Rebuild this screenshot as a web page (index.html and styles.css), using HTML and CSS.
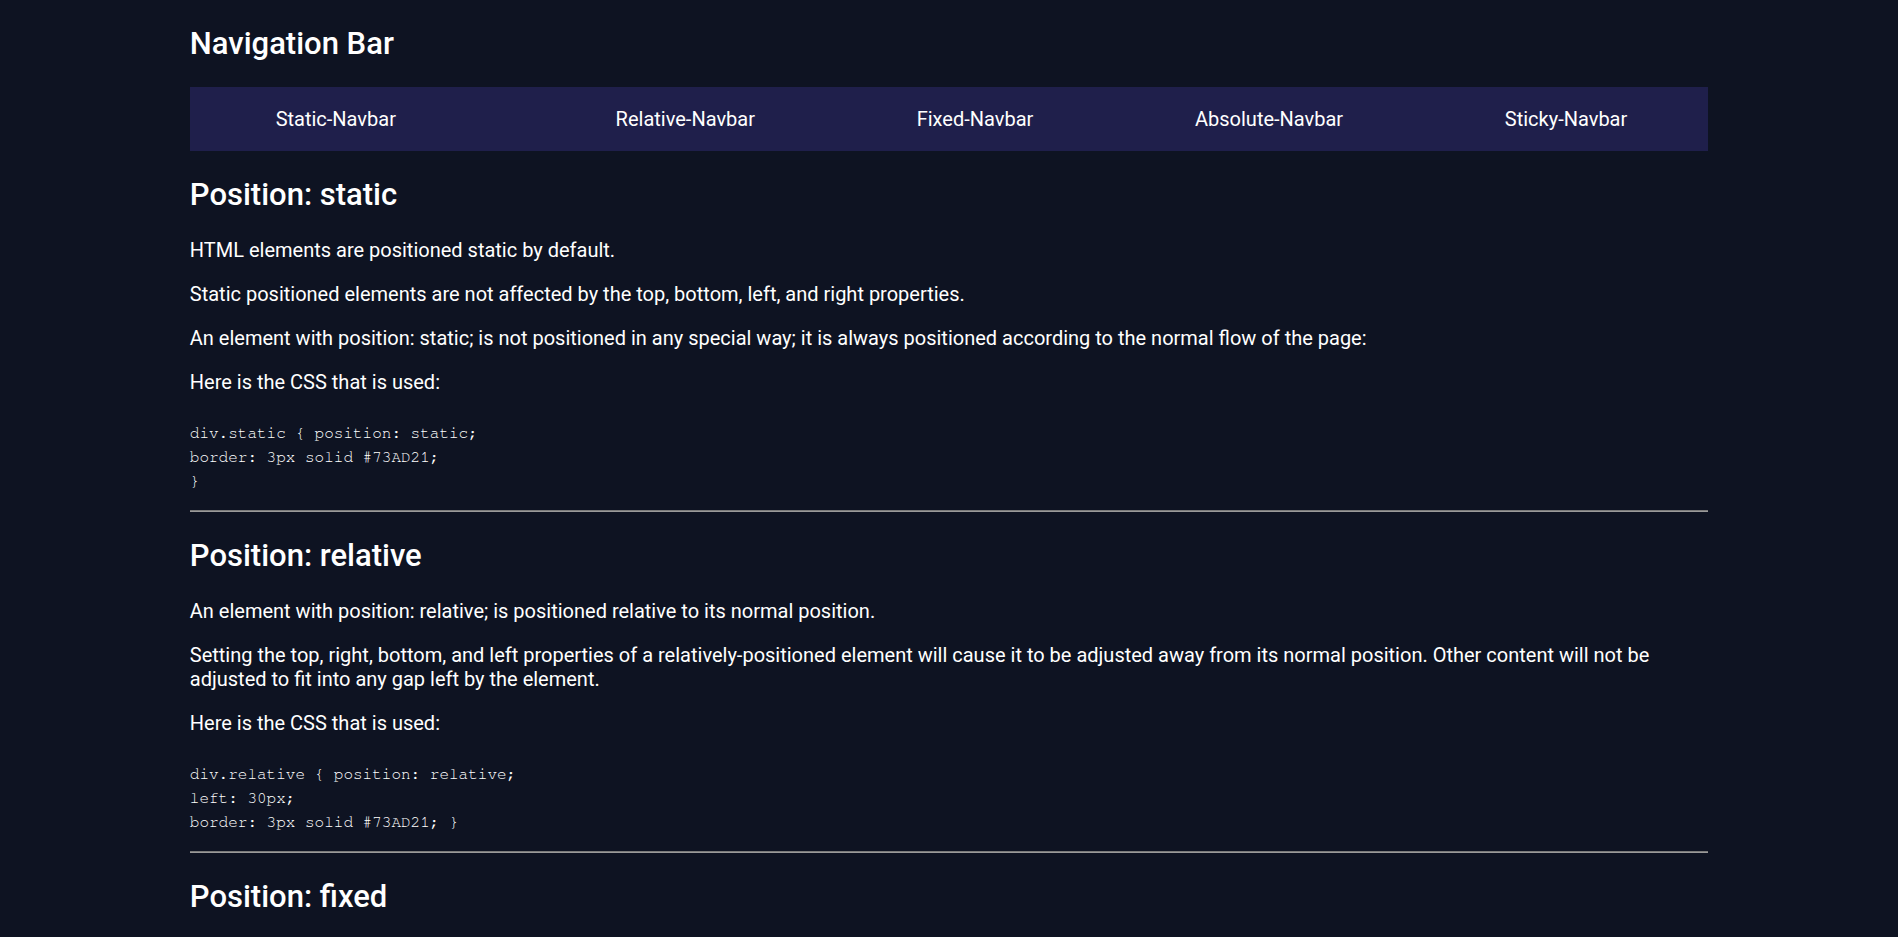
FILE: index.html
```html
<!DOCTYPE html>
<html lang="en">
<head>
<meta charset="utf-8">
<title>Navigation Bar</title>
<link rel="stylesheet" href="styles.css">
</head>
<body>
<div class="page">
  <h1 class="page-title">Navigation Bar</h1>
  <nav class="navbar">
    <a class="nav-link nav-link-first" href="#static">Static-Navbar</a>
    <a class="nav-link" href="#relative">Relative-Navbar</a>
    <a class="nav-link" href="#fixed">Fixed-Navbar</a>
    <a class="nav-link" href="#absolute">Absolute-Navbar</a>
    <a class="nav-link" href="#sticky">Sticky-Navbar</a>
  </nav>

  <section class="section" id="static">
    <h2 class="section-title">Position: static</h2>
    <p class="text">HTML elements are positioned static by default.</p>
    <p class="text">Static positioned elements are not affected by the top, bottom, left, and right properties.</p>
    <p class="text">An element with position: static; is not positioned in any special way; it is always positioned according to the normal flow of the page:</p>
    <p class="text">Here is the CSS that is used:</p>
    <pre class="code">div.static { position: static;
border: 3px solid #73AD21;
}</pre>
  </section>
  <hr class="divider">

  <section class="section" id="relative">
    <h2 class="section-title">Position: relative</h2>
    <p class="text">An element with position: relative; is positioned relative to its normal position.</p>
    <p class="text">Setting the top, right, bottom, and left properties of a relatively-positioned element will cause it to be adjusted away from its normal position. Other content will not be adjusted to fit into any gap left by the element.</p>
    <p class="text">Here is the CSS that is used:</p>
    <pre class="code">div.relative { position: relative;
left: 30px;
border: 3px solid #73AD21; }</pre>
  </section>
  <hr class="divider">

  <section class="section" id="fixed">
    <h2 class="section-title">Position: fixed</h2>
    <p class="text">An element with position: fixed; is positioned relative to the viewport, which means it always stays in the same place even if the page is scrolled. The top, right, bottom, and left properties are used to position the element.</p>
    <p class="text">A fixed element does not leave a gap in the page where it would normally have been located.</p>
    <p class="text">Here is the CSS that is used:</p>
    <pre class="code">div.fixed { position: fixed;
bottom: 0;
right: 0;
width: 300px;
border: 3px solid #73AD21; }</pre>
  </section>
</div>
</body>
</html>
```

FILE: styles.css
```css
html, body {
  margin: 0;
  padding: 0;
}

body {
  background: #0e1322;
  color: #ffffff;
  font-family: Roboto, "Noto Sans", Arial, sans-serif;
  font-size: 20px;
}

.page {
  width: 80%;
  margin: 0 auto;
  padding-top: 25px;
}

.page-title {
  font-size: 31px;
  font-weight: 500;
  margin: 0 0 25px;
}

.navbar {
  display: flex;
  justify-content: space-around;
  align-items: center;
  height: 64px;
  background: #1f1f4b;
}

.nav-link {
  color: #ffffff;
  text-decoration: none;
  font-size: 20px;
}

.nav-link-first {
  margin-left: 5px;
  margin-right: 58px;
}

.section-title {
  font-size: 31px;
  font-weight: 500;
  margin: 25px 0;
}

.text {
  margin: 20px 0;
  line-height: normal;
}

.code {
  font-family: "Nimbus Mono PS", "Nimbus Mono L", FreeMono, "Courier New", Courier, "Liberation Mono", monospace;
  font-size: 16px;
  line-height: 24px;
  margin: 20px 0 17px;
  padding-top: 7px;
  color: #ffffff;
}

.divider {
  margin: 17px 0 20px;
  border: 0;
  border-top: 1px solid #7a7a7a;
  border-bottom: 1px solid #9a9a9a;
}
```
